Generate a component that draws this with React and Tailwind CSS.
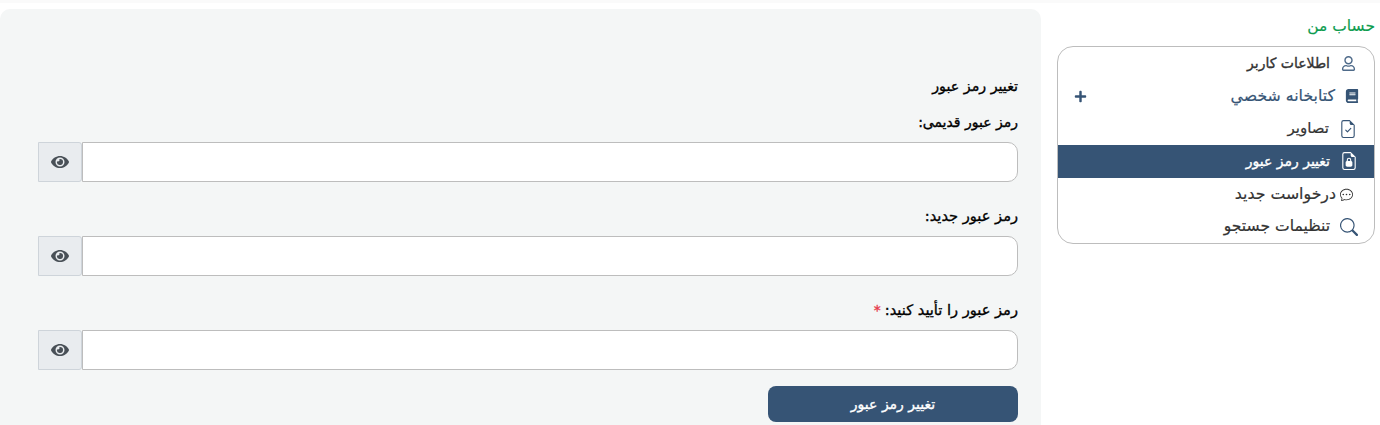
import { FaEye, FaPlus, FaBook, FaRegUser } from 'react-icons/fa'
import { BsFileEarmarkCheck, BsFileEarmarkLock2, BsChatDots, BsSearch } from 'react-icons/bs'

const fields = [
  { label: 'رمز عبور قدیمی:', y: 'mt-[10px]', size: 'text-[14px]' },
  { label: 'رمز عبور جدید:', y: 'mt-[20px]', size: 'text-[14.6px]' },
  { label: 'رمز عبور را تأیید کنید:', y: 'mt-[20px]', size: 'text-[14.6px]', required: true },
]

function PasswordField({ label, y, size, required }) {
  return (
    <div className={y}>
      <label className={`mb-[6px] block h-[28px] leading-[28px] text-black [-webkit-text-stroke:0.35px_black] ${size}`}>
        {label}
        {required && <span className="mr-1 text-[14px] text-[#e6394a] [-webkit-text-stroke:0.3px_#e6394a]">*</span>}
      </label>
      {/* rtl row: the input comes first, eye button ends up on the left */}
      <div className="flex h-[40px]">
        <input
          type="password"
          className="h-full flex-1 rounded-r-[10px] border border-[#bdbdbd] bg-white outline-none"
        />
        <button
          type="button"
          className="flex h-full w-[44px] items-center justify-center rounded-tr-[3px] rounded-br-[3px] border border-[#ced4da] bg-[#e9ecef] text-[#495057]"
        >
          <FaEye className="h-[18px] w-[18px]" />
        </button>
      </div>
    </div>
  )
}

function MenuRow({ icon, label, active, iconBox, plus, tint, size }) {
  return (
    <li
      className={`flex flex-1 items-center ${size} ${
        active ? 'bg-[#365475] text-white' : tint ? 'text-[#365475]' : 'text-[#333333]'
      }`}
    >
      <span className={`flex shrink-0 items-center justify-center ${iconBox}`}>{icon}</span>
      <span>{label}</span>
      {plus && <FaPlus className="mr-auto ml-[16px] h-[13px] w-[13px] text-[#365475]" />}
    </li>
  )
}

export default function App() {
  return (
    <div
      dir="rtl"
      className="h-[425px] overflow-hidden bg-white font-['DejaVu_Sans',sans-serif]"
    >
      <div className="h-[3px] bg-[#fafafa]" />
      <div className="flex items-start pt-[6px] pr-[5px]">
        {/* Sidebar */}
        <aside className="w-[318px] shrink-0 pt-[6px]">
          <h2 className="h-[31px] text-[15.5px] leading-[22px] text-[#0d9c4f] [-webkit-text-stroke:0.15px]">حساب من</h2>
          <ul className="flex h-[198px] flex-col overflow-hidden rounded-[16px] border border-[#bdbdbd]">
            <MenuRow
              label="اطلاعات کاربر"
              size="text-[14px] [-webkit-text-stroke:0.35px]"
              iconBox="w-[44px] pr-[7px]"
              icon={<FaRegUser className="h-[15px] w-[15px] text-[#4f6b8a]" />}
            />
            <MenuRow
              tint
              plus
              label="کتابخانه شخصي"
              size="text-[15.75px] [-webkit-text-stroke:0.2px]"
              iconBox="w-[39px] pr-[5px]"
              icon={<FaBook className="h-[14px] w-[14px] text-[#365475]" />}
            />
            <MenuRow
              label="تصاویر"
              size="text-[15px] [-webkit-text-stroke:0.2px]"
              iconBox="w-[45px] pr-[7px]"
              icon={<BsFileEarmarkCheck className="h-[18px] w-[18px] text-[#365475]" />}
            />
            <MenuRow
              active
              label="تغییر رمز عبور"
              size="text-[14px] [-webkit-text-stroke:0.35px]"
              iconBox="w-[44px] pr-[7px]"
              icon={<BsFileEarmarkLock2 className="h-[18px] w-[18px] text-white" />}
            />
            <MenuRow
              label="درخواست جدید"
              size="text-[15.75px] [-webkit-text-stroke:0.2px]"
              iconBox="w-[38px] pr-[18px]"
              icon={<BsChatDots className="h-[13px] w-[13px] text-[#333333]" />}
            />
            <MenuRow
              label="تنظیمات جستجو"
              size="text-[15.6px] [-webkit-text-stroke:0.2px]"
              iconBox="w-[44px] pr-[6px]"
              icon={<BsSearch className="h-[18px] w-[18px] text-[#365475]" />}
            />
          </ul>
        </aside>

        {/* Form panel */}
        <main className="mr-[16px] h-[420px] flex-1 rounded-t-[10px] bg-[#f4f6f6] pt-[65px] pr-[23px] pl-[38px]">
          <h3 className="h-[24px] text-[14.25px] leading-[24px] text-black [-webkit-text-stroke:0.35px_black]">تغییر رمز عبور</h3>
          {fields.map((f) => (
            <PasswordField key={f.label} {...f} />
          ))}
          <button
            type="button"
            className="mt-[16px] block h-[36px] w-[250px] rounded-[8px] bg-[#365475] text-[14px] text-white [-webkit-text-stroke:0.35px_white]"
          >
            تغییر رمز عبور
          </button>
        </main>
      </div>
    </div>
  )
}
